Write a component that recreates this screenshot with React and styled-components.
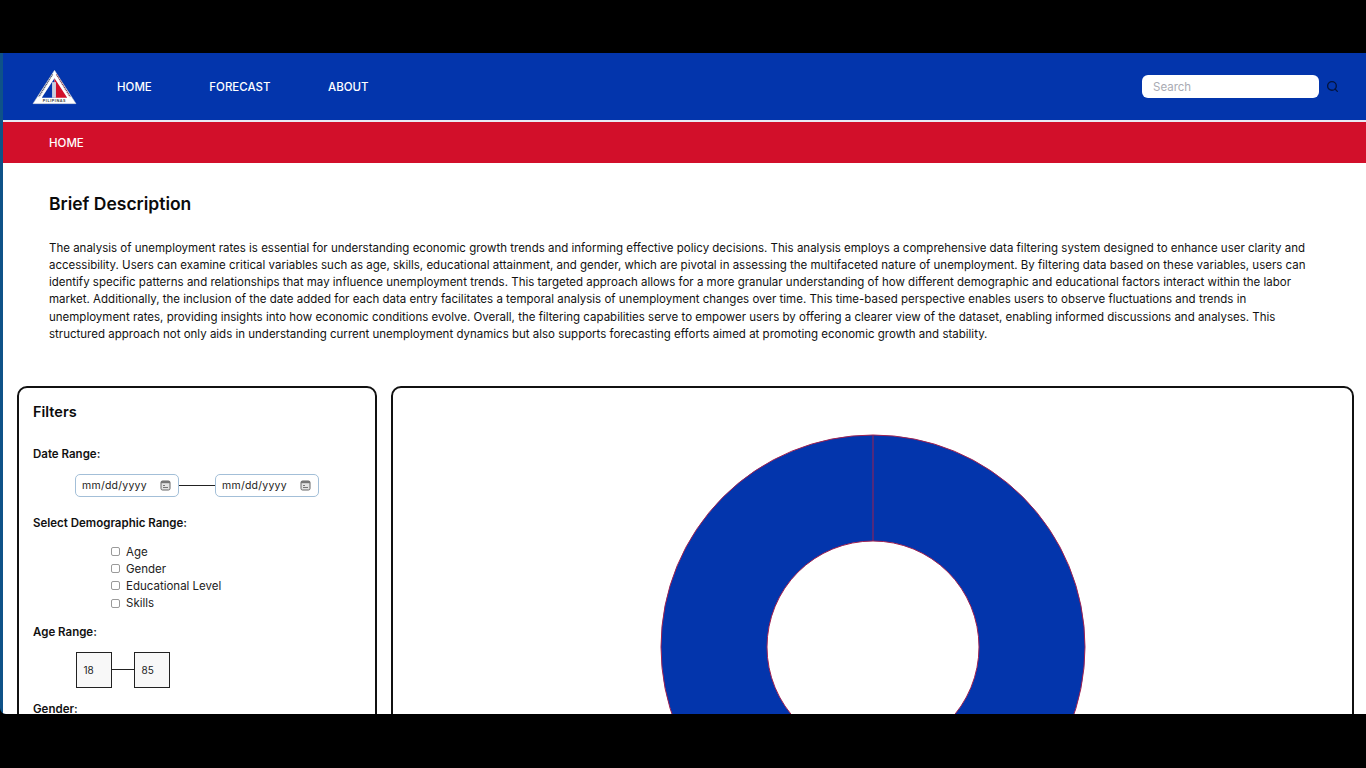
import React from "react";
import styled, { createGlobalStyle } from "styled-components";
import { Search } from "lucide-react";

const GlobalStyle = createGlobalStyle`
    html, body {
        margin: 0;
        padding: 0;
        height: 100%;
        background: #000;
        overflow: hidden;
        font-family: Inter, "Liberation Sans", sans-serif;
    }
`;

const Screen = styled.div`
    box-sizing: border-box;
    width: 1366px;
    height: 768px;
    padding: 53px 0 54px;
    background: #000;
`;

const Frame = styled.div`
    height: 661px;
    overflow: hidden;
    background: #0e5288;
    border-bottom-left-radius: 6px;
`;

const Page = styled.div`
    margin-left: 3px;
    height: 661px;
    overflow: hidden;
    background: #fff;
`;

const NavBar = styled.nav`
    box-sizing: border-box;
    height: 69px;
    display: flex;
    align-items: center;
    background: #0335ac;
    border-bottom: 2px solid #e9ebf3;
    padding: 0 27px 0 29px;
`;

const Logo = styled.svg`
    width: 45px;
    height: 36px;
    flex: none;
`;

const NavLinks = styled.div`
    display: flex;
    gap: 57.5px;
    margin-left: 40px;
    flex: 1;
`;

const NavLink = styled.a`
    color: #fff;
    font-size: 11.5px;
    font-weight: 450;
    line-height: 16px;
`;

const SearchBox = styled.div`
    display: flex;
    align-items: center;
    gap: 7px;
`;

const SearchInput = styled.div`
    box-sizing: border-box;
    width: 177px;
    height: 23px;
    border-radius: 6px;
    background: #fff;
    color: #a9abb3;
    font-size: 11.5px;
    line-height: 24px;
    padding-left: 11px;
`;

const SearchIcon = styled(Search)`
    color: #04143f;
    width: 13px;
    height: 13px;
`;

const SubBar = styled.div`
    box-sizing: border-box;
    height: 41px;
    background: #d20f2a;
    color: #fff;
    font-size: 11.5px;
    font-weight: 450;
    line-height: 42px;
    padding-left: 46px;
`;

const Intro = styled.section`
    padding: 29px 46px 0;
`;

const Title = styled.h1`
    margin: 0;
    font-size: 17.5px;
    font-weight: 600;
    line-height: 24px;
    color: #0b0b0b;
`;

const Body = styled.p`
    margin: 24px 0 0;
    font-size: 11.5px;
    line-height: 17.15px;
    color: #111;
`;

const Panels = styled.div`
    display: flex;
    gap: 14px;
    margin: 43px 12px 0 14px;
`;

const Card = styled.div`
    box-sizing: border-box;
    background: #fff;
    border: 2px solid #111;
    border-radius: 10px;
    height: 600px;
`;

const FilterCard = styled(Card)`
    width: 360px;
    flex: none;
    padding: 14px 14px;
`;

const ChartCard = styled(Card)`
    flex: 1;
    display: flex;
    justify-content: center;
    padding-top: 46px;
`;

const FilterTitle = styled.h2`
    margin: 0;
    font-size: 14.5px;
    font-weight: 600;
    line-height: 20px;
    color: #0b0b0b;
`;

const Label = styled.div`
    margin-top: ${(p) => p.$top}px;
    font-size: 11.5px;
    font-weight: 600;
    line-height: 16px;
    color: #111;
`;

const RangeRow = styled.div`
    display: flex;
    align-items: center;
    margin: ${(p) => p.$top}px 0 0 ${(p) => p.$left}px;
`;

const DateField = styled.div`
    box-sizing: border-box;
    width: 104px;
    height: 23px;
    display: flex;
    align-items: center;
    justify-content: space-between;
    padding: 0 7px 0 6px;
    background: #fff;
    border: 1px solid #a3bfd8;
    border-radius: 5px;
    font-size: 10.5px;
    letter-spacing: 0.25px;
    color: #222;
`;

const Connector = styled.div`
    width: ${(p) => p.$width}px;
    height: 1px;
    background: #222;
`;

const CalendarIcon = styled.svg`
    width: 11px;
    height: 11px;
    flex: none;
`;

const CheckList = styled.div`
    display: flex;
    flex-direction: column;
    margin: 12px 0 0 78px;
`;

const CheckRow = styled.label`
    display: flex;
    align-items: center;
    gap: 6px;
    height: 17.2px;
    font-size: 11.5px;
    color: #222;
`;

const CheckBox = styled.span`
    box-sizing: border-box;
    width: 9px;
    height: 9px;
    border: 1px solid #9a9a9a;
    border-radius: 2px;
    background: #fff;
`;

const AgeBox = styled.div`
    box-sizing: border-box;
    width: 36px;
    height: 36px;
    display: flex;
    align-items: center;
    padding: 1px 0 0 6.5px;
    background: #f8f8f8;
    border: 1px solid #222;
    font-size: 10px;
    color: #222;
`;

const Donut = styled.svg`
    width: 426px;
    height: 426px;
    flex: none;
`;

const DESCRIPTION =
    "The analysis of unemployment rates is essential for understanding economic growth trends and informing effective policy decisions. This analysis employs a comprehensive data filtering system designed to enhance user clarity and accessibility. Users can examine critical variables such as age, skills, educational attainment, and gender, which are pivotal in assessing the multifaceted nature of unemployment. By filtering data based on these variables, users can identify specific patterns and relationships that may influence unemployment trends. This targeted approach allows for a more granular understanding of how different demographic and educational factors interact within the labor market. Additionally, the inclusion of the date added for each data entry facilitates a temporal analysis of unemployment changes over time. This time-based perspective enables users to observe fluctuations and trends in unemployment rates, providing insights into how economic conditions evolve. Overall, the filtering capabilities serve to empower users by offering a clearer view of the dataset, enabling informed discussions and analyses. This structured approach not only aids in understanding current unemployment dynamics but also supports forecasting efforts aimed at promoting economic growth and stability.";

function Calendar() {
    return (
        <CalendarIcon viewBox="0 0 11 11">
            <rect x="1" y="1" width="9" height="9" rx="1.5" fill="#e4e4e4" stroke="#666" strokeWidth="1" />
            <rect x="1" y="1" width="9" height="2.2" fill="#777" />
            <rect x="3" y="5" width="2" height="1" fill="#777" />
            <rect x="3" y="7" width="5" height="1" fill="#777" />
        </CalendarIcon>
    );
}

export default function App() {
    return (
        <Screen>
            <GlobalStyle />
            <Frame>
                <Page>
                    <NavBar>
                        <Logo viewBox="0 0 46 36">
                            <polygon points="23,1 45,35 1,35" fill="#fff" stroke="#d8d8d8" strokeWidth="0.5" />
                            <polygon points="23,9 23,29 10,29" fill="#0335ac" />
                            <polygon points="23,9 36,29 23,29" fill="#d20f2a" />
                            <rect x="20.5" y="13" width="4" height="16" fill="#c9cfdf" />
                            <line x1="21" y1="5" x2="7" y2="28" stroke="#5a5f78" strokeWidth="1.6" strokeDasharray="1.2 0.7" />
                            <line x1="25" y1="5" x2="39" y2="28" stroke="#8a4a5a" strokeWidth="1.6" strokeDasharray="1.2 0.7" />
                            <text x="23" y="33.8" textAnchor="middle" fontSize="3.8" fontWeight="700" letterSpacing="0.6" fill="#444">
                                PILIPINAS
                            </text>
                        </Logo>
                        <NavLinks>
                            <NavLink>HOME</NavLink>
                            <NavLink>FORECAST</NavLink>
                            <NavLink>ABOUT</NavLink>
                        </NavLinks>
                        <SearchBox>
                            <SearchInput>Search</SearchInput>
                            <SearchIcon strokeWidth={2.5} />
                        </SearchBox>
                    </NavBar>
                    <SubBar>HOME</SubBar>
                    <Intro>
                        <Title>Brief Description</Title>
                        <Body>{DESCRIPTION}</Body>
                    </Intro>
                    <Panels>
                        <FilterCard>
                            <FilterTitle>Filters</FilterTitle>
                            <Label $top={24}>Date Range:</Label>
                            <RangeRow $top={12} $left={42}>
                                <DateField>
                                    mm/dd/yyyy
                                    <Calendar />
                                </DateField>
                                <Connector $width={36} />
                                <DateField>
                                    mm/dd/yyyy
                                    <Calendar />
                                </DateField>
                            </RangeRow>
                            <Label $top={18}>Select Demographic Range:</Label>
                            <CheckList>
                                {["Age", "Gender", "Educational Level", "Skills"].map((item) => (
                                    <CheckRow key={item}>
                                        <CheckBox />
                                        {item}
                                    </CheckRow>
                                ))}
                            </CheckList>
                            <Label $top={12}>Age Range:</Label>
                            <RangeRow $top={12} $left={43}>
                                <AgeBox>18</AgeBox>
                                <Connector $width={22} />
                                <AgeBox>85</AgeBox>
                            </RangeRow>
                            <Label $top={13}>Gender:</Label>
                        </FilterCard>
                        <ChartCard>
                            <Donut viewBox="0 0 426 426">
                                <circle cx="213" cy="213" r="159" fill="none" stroke="#0335ac" strokeWidth="106" />
                                <circle cx="213" cy="213" r="212" fill="none" stroke="#a02050" strokeWidth="1" />
                                <circle cx="213" cy="213" r="106" fill="none" stroke="#a02050" strokeWidth="1" />
                                <line x1="213" y1="1" x2="213" y2="107" stroke="#a02050" strokeWidth="1" />
                            </Donut>
                        </ChartCard>
                    </Panels>
                </Page>
            </Frame>
        </Screen>
    );
}
